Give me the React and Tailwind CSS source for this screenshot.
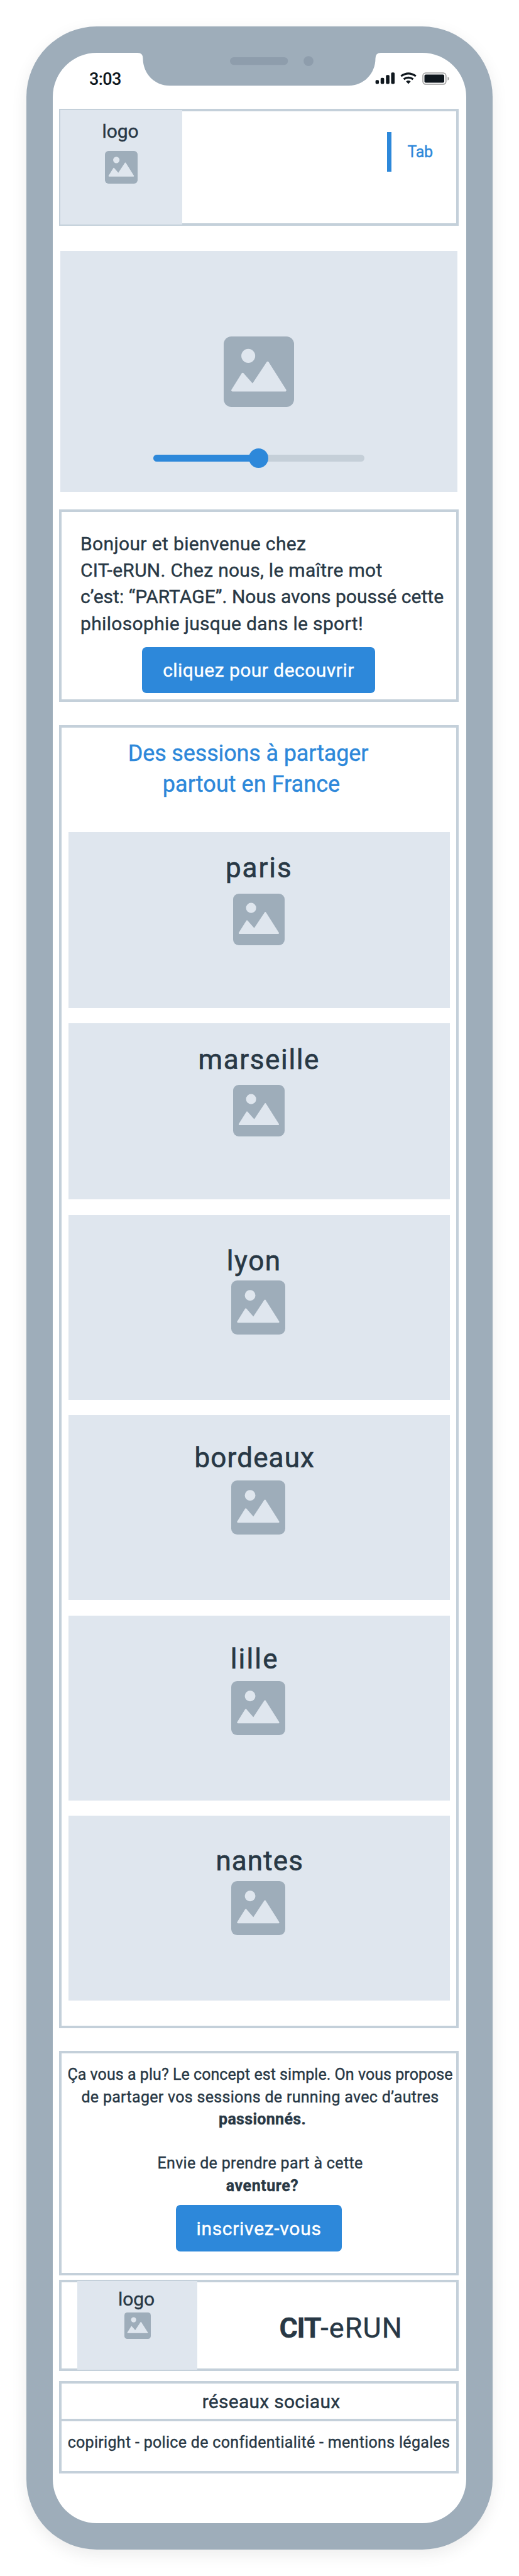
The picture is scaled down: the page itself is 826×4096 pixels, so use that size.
const cities = [
  { name: "paris", card: "h-[280px] pt-[35.6px]", label: "tracking-[1.94px]", icon: "mt-[18.6px] size-[82px]" },
  { name: "marseille", card: "h-[280px] pt-[35.6px]", label: "tracking-[1.63px]", icon: "mt-[18.6px] size-[82px]" },
  { name: "lyon", card: "h-[294px] pt-[51.2px]", label: "pr-[16px] tracking-[1.57px]", icon: "mt-[8.6px] mr-[2px] size-[86px]" },
  { name: "bordeaux", card: "h-[294px] pt-[46.2px]", label: "pr-[14px] tracking-[1.12px]", icon: "mt-[13.6px] mr-[2px] size-[86px]" },
  { name: "lille", card: "h-[294px] pt-[47.5px]", label: "pr-[14px] tracking-[2.2px]", icon: "mt-[12.6px] mr-[2px] size-[86px]" },
  { name: "nantes", card: "h-[294px] pt-[49.5px]", label: "pl-[2px] tracking-[1.11px]", icon: "mt-[10.6px] mr-[2px] size-[86px]" },
];

function ImageIcon({ className }) {
  return (
    <svg viewBox="0 0 128 128" className={`block shrink-0 ${className}`} aria-hidden="true">
      <rect width="128" height="128" rx="14" fill="#9eadba" />
      <circle cx="44.7" cy="35.3" r="12.6" fill="#dfe6ee" />
      <path
        d="M15.8 98 L34.5 68 L52.7 88.6 L80 47.4 L112 98 Z"
        fill="#dfe6ee"
        stroke="#dfe6ee"
        strokeWidth="4"
        strokeLinejoin="round"
      />
    </svg>
  );
}

function StatusIcons() {
  return (
    <svg viewBox="680 130 140 26" className="block h-[22.75px] w-[122.5px]" aria-hidden="true">
      <g fill="#0f171e">
        <rect x="683" y="145" width="6.2" height="7.4" rx="2" />
        <rect x="692.3" y="141" width="6.4" height="11.4" rx="2" />
        <rect x="702" y="136" width="6.4" height="16.4" rx="2" />
        <rect x="711.4" y="131.4" width="6.4" height="21" rx="2" />
        <path d="M738.6 147.6 Q742.7 144.6 747 147.6 L742.8 152.4 Z" />
        <rect x="772" y="135" width="36" height="15" rx="2.4" />
      </g>
      <g fill="none" stroke="#0f171e" strokeWidth="3.6">
        <path d="M729.4 138 Q742.8 128.4 756.4 138" />
        <path d="M734.4 143.6 Q742.8 137.6 751.4 143.6" />
      </g>
      <rect x="769.2" y="132.2" width="42" height="20.6" rx="5" fill="none" stroke="#9b9b9b" strokeWidth="1.8" />
      <path d="M814.2 139 Q816.8 140 816.8 142.5 Q816.8 145 814.2 146 Z" fill="#9b9b9b" />
    </svg>
  );
}

function Notch() {
  return (
    <svg viewBox="0 0 387 54" className="absolute top-[-1px] left-[135px] h-[54px] w-[387px]" aria-hidden="true">
      <path
        d="M0 0 V1 Q8.5 1 8.5 10 C8.5 34 27 53.2 51 53.2 H336 C360 53.2 378.5 34 378.5 10 Q378.5 1 387 1 V0 Z"
        fill="#9eadba"
      />
      <rect x="147" y="8" width="92.4" height="12.2" rx="6.1" fill="#8e9dac" />
      <circle cx="272" cy="14.1" r="7.9" fill="#8e9dac" />
    </svg>
  );
}

function Box({ className, children }) {
  return <section className={`w-[636px] border-4 border-[#c4d0da] ${className}`}>{children}</section>;
}

export default function App() {
  return (
    <div className="h-[4096px] w-[826px] overflow-hidden bg-white pt-[42px] pl-[42px] font-[Roboto,sans-serif] text-[#283845] [-webkit-text-stroke:0.4px]">
      <div className="h-[4012px] w-[742px] rounded-[112px] bg-[#9eadba] p-[42px] shadow-[0_8px_26px_rgba(0,0,0,0.08)]">
        <div className="relative flex h-[3928px] flex-col rounded-[70px] bg-white pl-[10px]">
          <Notch />

          <header className="flex h-[89px] items-start justify-between pr-[24.5px] pl-[48px]">
            <span className="pt-[25.5px] text-[27px] leading-[32px] font-medium tracking-[-0.64px] text-[#0f171e] [-webkit-text-stroke:0px]">3:03</span>
            <div className="pt-[29.7px]">
              <StatusIcons />
            </div>
          </header>

          <Box className="flex h-[186px]">
            <div className="-my-[2px] -ml-[2px] flex w-[194px] flex-col items-center bg-[#dfe6ee] pt-[19px]">
              <span className="pr-[3px] text-[30px] leading-[30px] tracking-[-0.12px]">logo</span>
              <ImageIcon className="mt-[16px] mr-[1px] size-[52px]" />
            </div>
            <nav className="mt-[33px] ml-auto h-[63px] w-[110px] border-l-[7px] border-[#2d88da] pl-[25.5px] text-[25px] leading-[63px] tracking-[-0.32px] text-[#2d88da]">
              Tab
            </nav>
          </Box>

          <section className="mt-[40px] ml-[2px] flex h-[383px] w-[632px] flex-col items-center bg-[#dfe6ee] pt-[135.5px]">
            <ImageIcon className="size-[112px]" />
            <div className="mt-[66.5px] mr-px flex h-[31px] w-[336px] items-center">
              <div className="h-[10.5px] w-[168px] rounded-full bg-[#2d88da]" />
              <div className="z-10 -mx-[15.5px] size-[31px] shrink-0 rounded-full bg-[#2d88da]" />
              <div className="h-[10.5px] w-[168px] rounded-full bg-[#c5cfd8]" />
            </div>
          </section>

          <Box className="mt-[28px] flex h-[306px] flex-col pt-[30px]">
            <div className="pl-[30px] text-[30px] leading-[42.2px] whitespace-nowrap">
              <p className="tracking-[0.36px]">Bonjour et bienvenue chez</p>
              <p className="tracking-[0.28px]">CIT-eRUN. Chez nous, le maître mot</p>
              <p className="tracking-[0.01px]">c’est: “PARTAGE”. Nous avons poussé cette</p>
              <p className="tracking-[0.33px]">philosophie jusque dans le sport!</p>
            </div>
            <button className="mt-[16px] mr-px h-[73px] w-[371px] self-center rounded-[7px] bg-[#2d88da] text-[30px] leading-[73px] tracking-[0.46px] text-white">
              cliquez pour decouvrir
            </button>
          </Box>

          <Box className="mt-[37px] h-[2072px] pt-[17px]">
            <h2 className="text-center text-[36px] leading-[49px] text-[#2d88da]">
              <span className="block pr-[34px] tracking-[-0.15px]">Des sessions à partager</span>
              <span className="block pr-[24px] tracking-[0.04px]">partout en France</span>
            </h2>
            <div className="mt-[50.75px] ml-[10.5px] flex w-[607.5px] flex-col gap-[24.5px]">
              {cities.map((city) => (
                <article key={city.name} className={`flex flex-col items-center bg-[#dfe6ee] ${city.card}`}>
                  <h3 className={`text-[44px] leading-[44px] [-webkit-text-stroke:0.65px] ${city.label}`}>{city.name}</h3>
                  <ImageIcon className={city.icon} />
                </article>
              ))}
            </div>
          </Box>

          <Box className="mt-[36px] flex h-[357px] flex-col pt-[16.4px]">
            <div className="pl-[4px] text-center text-[25px] leading-[35.25px] whitespace-nowrap">
              <p className="tracking-[0.05px]">Ça vous a plu? Le concept est simple. On vous propose</p>
              <p className="tracking-[0.3px]">de partager vos sessions de running avec d’autres</p>
              <p className="pl-[7px] font-bold tracking-[0.32px]">passionnés.</p>
              <p className="mt-[35.25px] tracking-[0.34px]">Envie de prendre part à cette</p>
              <p className="pl-[7px] font-bold tracking-[0.53px]">aventure?</p>
            </div>
            <button className="mt-[13.5px] h-[73.5px] w-[264px] self-center rounded-[7px] bg-[#2d88da] text-[30px] leading-[73px] tracking-[0.7px] text-white">
              inscrivez-vous
            </button>
          </Box>

          <Box className="mt-[7px] flex h-[145px]">
            <div className="-my-[2px] ml-[25px] flex w-[191px] flex-col items-center bg-[#dfe6ee] pt-[14px]">
              <span className="pr-[3px] text-[30px] leading-[30px] tracking-[-0.12px]">logo</span>
              <ImageIcon className="mt-[6px] size-[42px]" />
            </div>
            <p className="pt-[47.8px] pl-[130.5px] text-[45px] leading-[50px] whitespace-nowrap">
              <span className="font-bold tracking-[-1.4px]">CIT</span>
              <span className="tracking-[1.1px]">-eRUN</span>
            </p>
          </Box>

          <Box className="mt-[16px] h-[147px] text-center">
            <p className="h-[60px] border-b-4 border-[#c4d0da] pt-px pl-[39px] text-[30px] leading-[56px] tracking-[0.27px]">
              réseaux sociaux
            </p>
            <p className="pt-[16.5px] text-[25px] leading-[34px] tracking-[0.31px] whitespace-nowrap">
              copiright - police de confidentialité - mentions légales
            </p>
          </Box>
        </div>
      </div>
    </div>
  );
}
